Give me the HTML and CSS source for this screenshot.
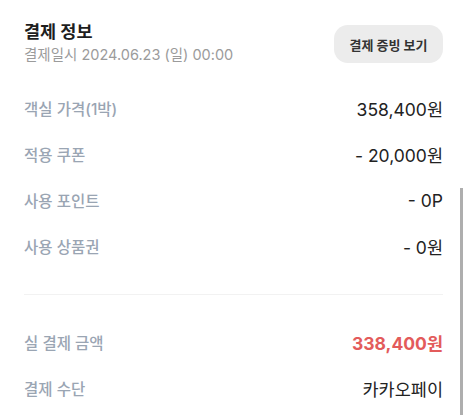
FILE: index.html
```html
<!DOCTYPE html>
<html lang="ko">
<head>
<meta charset="utf-8">
<link rel="stylesheet" href="styles.css">
</head>
<body>
<div class="page">
  <div class="header">
    <div class="titles">
      <div class="title">결제 정보</div>
      <div class="sub">결제일시 2024.06.23 (일) 00:00</div>
    </div>
    <button class="btn">결제 증빙 보기</button>
  </div>
  <div class="list first">
    <div class="row"><span class="label">객실 가격(1박)</span><span class="value">358,400원</span></div>
    <div class="row"><span class="label">적용 쿠폰</span><span class="value">- 20,000원</span></div>
    <div class="row"><span class="label">사용 포인트</span><span class="value">- 0P</span></div>
    <div class="row"><span class="label">사용 상품권</span><span class="value">- 0원</span></div>
  </div>
  <div class="divider"></div>
  <div class="list">
    <div class="row"><span class="label">실 결제 금액</span><span class="value total">338,400원</span></div>
    <div class="row"><span class="label">결제 수단</span><span class="value">카카오페이</span></div>
  </div>
</div>
<div class="scrollbar"></div>
</body>
</html>
```
FILE: styles.css
```css
html, body {
  margin: 0;
  padding: 0;
  background: #fff;
  overflow: hidden;
}
body {
  font-family: "Inter", "Noto Sans CJK KR", sans-serif;
  color: #222;
}
.page {
  padding: 20px 23px 0 24px;
}
.header {
  display: flex;
  justify-content: space-between;
  align-items: flex-start;
}
.title {
  font-size: 17.5px;
  font-weight: 700;
  line-height: 24px;
  color: #1e1e1e;
}
.sub {
  font-size: 14.5px;
  line-height: 22px;
  color: #9b9b9b;
}
.btn {
  margin-top: 5px;
  width: 109px;
  height: 38px;
  border: none;
  border-radius: 14px;
  background: #ececec;
  font-family: inherit;
  font-size: 13px;
  font-weight: 700;
  color: #333;
  padding: 0;
}
.list.first {
  margin-top: 19px;
}
.row {
  height: 46px;
  display: flex;
  justify-content: space-between;
  align-items: center;
}
.label {
  font-size: 15.5px;
  font-weight: 500;
  color: #9aa5b3;
}
.value {
  font-size: 17.5px;
  color: #222;
}
.value.total {
  color: #e35b5b;
  font-weight: 700;
}
.divider {
  height: 1px;
  background: #f2f2f2;
  margin: 25px 0 24px;
}
.scrollbar {
  position: absolute;
  left: 460px;
  top: 188px;
  width: 3px;
  height: 227px;
  background: #aeaeae;
}
```
